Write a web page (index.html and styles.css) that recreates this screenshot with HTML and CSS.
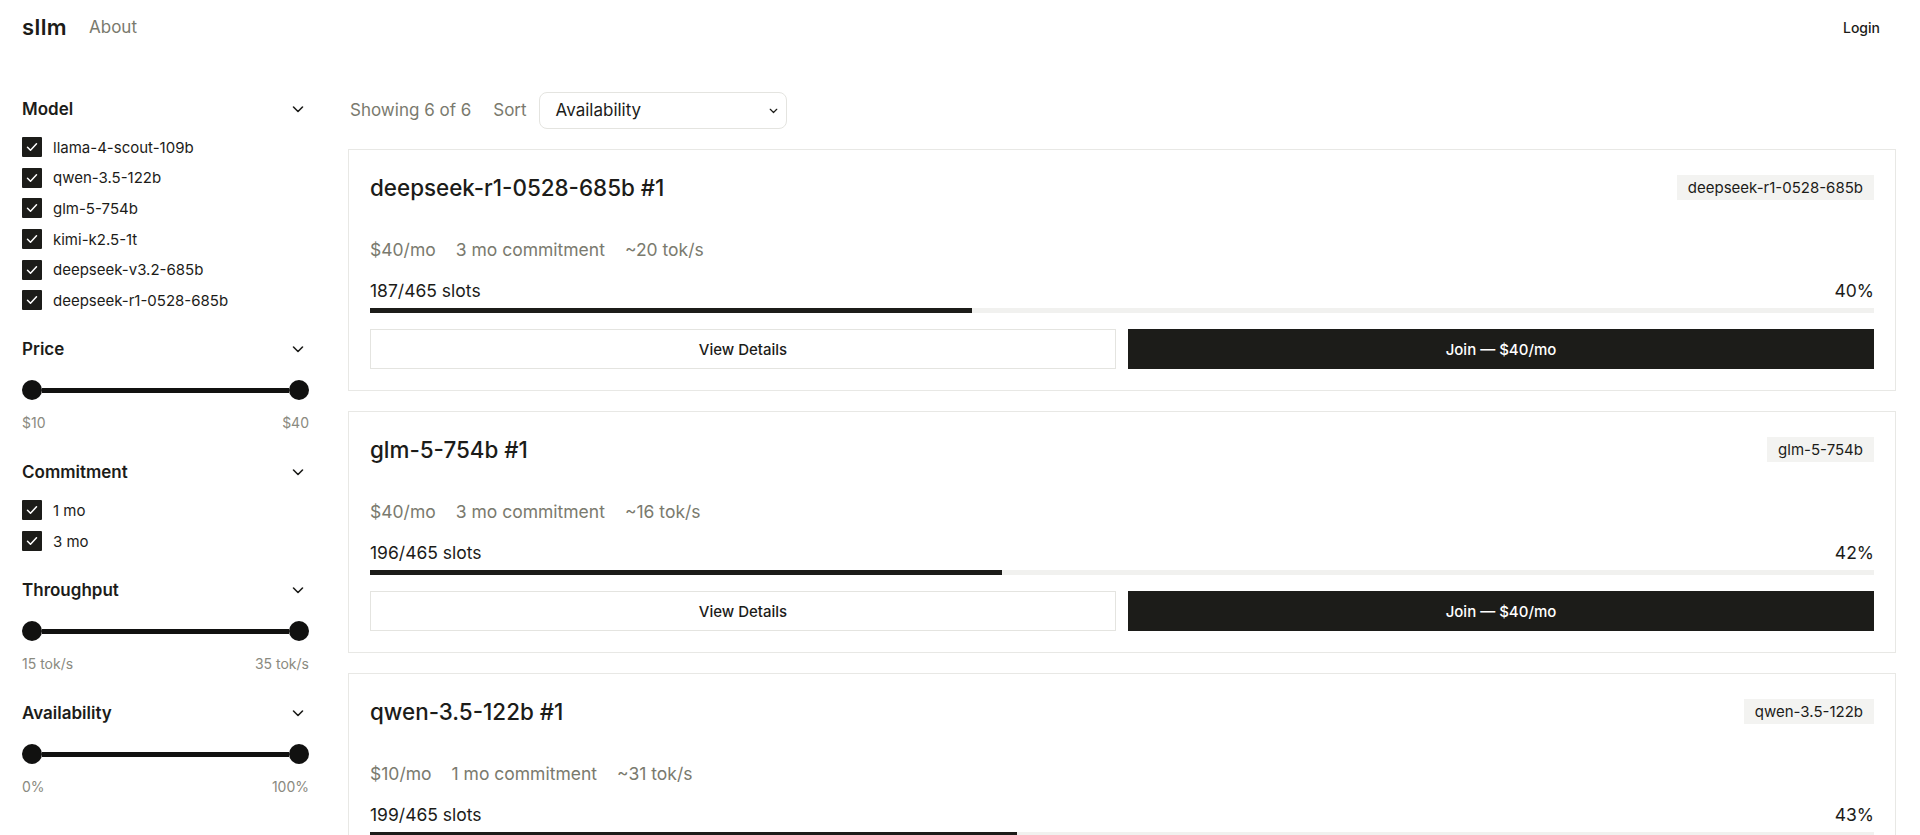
FILE: index.html
```html
<!DOCTYPE html>
<html lang="en">
<head>
<meta charset="utf-8">
<title>sllm</title>
<link rel="stylesheet" href="styles.css">
</head>
<body>
<header class="topbar">
  <nav class="nav-left">
    <a class="logo" href="#">sllm</a>
    <a class="nav-link" href="#">About</a>
  </nav>
  <a class="login" href="#">Login</a>
</header>

<div class="layout">
  <aside class="sidebar">
    <section class="filter">
      <div class="filter-head"><span>Model</span><svg class="chev" viewBox="0 0 16 16"><path d="M3.5 6l4.5 4.5L12.5 6"/></svg></div>
      <ul class="checks">
        <li><span class="box"><svg viewBox="0 0 20 20"><path d="M5.5 10.2l3 3 6-6.4"/></svg></span>llama-4-scout-109b</li>
        <li><span class="box"><svg viewBox="0 0 20 20"><path d="M5.5 10.2l3 3 6-6.4"/></svg></span>qwen-3.5-122b</li>
        <li><span class="box"><svg viewBox="0 0 20 20"><path d="M5.5 10.2l3 3 6-6.4"/></svg></span>glm-5-754b</li>
        <li><span class="box"><svg viewBox="0 0 20 20"><path d="M5.5 10.2l3 3 6-6.4"/></svg></span>kimi-k2.5-1t</li>
        <li><span class="box"><svg viewBox="0 0 20 20"><path d="M5.5 10.2l3 3 6-6.4"/></svg></span>deepseek-v3.2-685b</li>
        <li><span class="box"><svg viewBox="0 0 20 20"><path d="M5.5 10.2l3 3 6-6.4"/></svg></span>deepseek-r1-0528-685b</li>
      </ul>
    </section>

    <section class="filter">
      <div class="filter-head"><span>Price</span><svg class="chev" viewBox="0 0 16 16"><path d="M3.5 6l4.5 4.5L12.5 6"/></svg></div>
      <div class="range"><span class="thumb"></span><span class="track"></span><span class="thumb"></span></div>
      <div class="range-labels"><span>$10</span><span>$40</span></div>
    </section>

    <section class="filter">
      <div class="filter-head"><span>Commitment</span><svg class="chev" viewBox="0 0 16 16"><path d="M3.5 6l4.5 4.5L12.5 6"/></svg></div>
      <ul class="checks">
        <li><span class="box"><svg viewBox="0 0 20 20"><path d="M5.5 10.2l3 3 6-6.4"/></svg></span>1 mo</li>
        <li><span class="box"><svg viewBox="0 0 20 20"><path d="M5.5 10.2l3 3 6-6.4"/></svg></span>3 mo</li>
      </ul>
    </section>

    <section class="filter">
      <div class="filter-head"><span>Throughput</span><svg class="chev" viewBox="0 0 16 16"><path d="M3.5 6l4.5 4.5L12.5 6"/></svg></div>
      <div class="range"><span class="thumb"></span><span class="track"></span><span class="thumb"></span></div>
      <div class="range-labels"><span>15 tok/s</span><span>35 tok/s</span></div>
    </section>

    <section class="filter">
      <div class="filter-head"><span>Availability</span><svg class="chev" viewBox="0 0 16 16"><path d="M3.5 6l4.5 4.5L12.5 6"/></svg></div>
      <div class="range"><span class="thumb"></span><span class="track"></span><span class="thumb"></span></div>
      <div class="range-labels"><span>0%</span><span>100%</span></div>
    </section>
  </aside>

  <main class="main">
    <div class="toolbar">
      <span class="count">Showing 6 of 6</span>
      <span class="sort-label">Sort</span>
      <div class="select"><span>Availability</span><svg viewBox="0 0 16 16"><path d="M4 6.5l4 4 4-4"/></svg></div>
    </div>

    <div class="cards">
      <article class="card">
        <div class="card-head"><h2 class="card-title">deepseek-r1-0528-685b #1</h2><span class="tag">deepseek-r1-0528-685b</span></div>
        <div class="meta"><span>$40/mo</span><span>3 mo commitment</span><span>~20 tok/s</span></div>
        <div class="slots"><span>187/465 slots</span><span>40%</span></div>
        <div class="bar"><div class="fill" style="width:40%"></div></div>
        <div class="actions"><button class="btn btn-outline">View Details</button><button class="btn btn-solid">Join — $40/mo</button></div>
      </article>

      <article class="card">
        <div class="card-head"><h2 class="card-title">glm-5-754b #1</h2><span class="tag">glm-5-754b</span></div>
        <div class="meta"><span>$40/mo</span><span>3 mo commitment</span><span>~16 tok/s</span></div>
        <div class="slots"><span>196/465 slots</span><span>42%</span></div>
        <div class="bar"><div class="fill" style="width:42%"></div></div>
        <div class="actions"><button class="btn btn-outline">View Details</button><button class="btn btn-solid">Join — $40/mo</button></div>
      </article>

      <article class="card">
        <div class="card-head"><h2 class="card-title">qwen-3.5-122b #1</h2><span class="tag">qwen-3.5-122b</span></div>
        <div class="meta"><span>$10/mo</span><span>1 mo commitment</span><span>~31 tok/s</span></div>
        <div class="slots"><span>199/465 slots</span><span>43%</span></div>
        <div class="bar"><div class="fill" style="width:43%"></div></div>
        <div class="actions"><button class="btn btn-outline">View Details</button><button class="btn btn-solid">Join — $10/mo</button></div>
      </article>

      <article class="card">
        <div class="card-head"><h2 class="card-title">kimi-k2.5-1t #1</h2><span class="tag">kimi-k2.5-1t</span></div>
        <div class="meta"><span>$20/mo</span><span>1 mo commitment</span><span>~24 tok/s</span></div>
        <div class="slots"><span>221/465 slots</span><span>48%</span></div>
        <div class="bar"><div class="fill" style="width:48%"></div></div>
        <div class="actions"><button class="btn btn-outline">View Details</button><button class="btn btn-solid">Join — $20/mo</button></div>
      </article>

      <article class="card">
        <div class="card-head"><h2 class="card-title">deepseek-v3.2-685b #1</h2><span class="tag">deepseek-v3.2-685b</span></div>
        <div class="meta"><span>$30/mo</span><span>3 mo commitment</span><span>~22 tok/s</span></div>
        <div class="slots"><span>247/465 slots</span><span>53%</span></div>
        <div class="bar"><div class="fill" style="width:53%"></div></div>
        <div class="actions"><button class="btn btn-outline">View Details</button><button class="btn btn-solid">Join — $30/mo</button></div>
      </article>

      <article class="card">
        <div class="card-head"><h2 class="card-title">llama-4-scout-109b #1</h2><span class="tag">llama-4-scout-109b</span></div>
        <div class="meta"><span>$10/mo</span><span>1 mo commitment</span><span>~35 tok/s</span></div>
        <div class="slots"><span>289/465 slots</span><span>62%</span></div>
        <div class="bar"><div class="fill" style="width:62%"></div></div>
        <div class="actions"><button class="btn btn-outline">View Details</button><button class="btn btn-solid">Join — $10/mo</button></div>
      </article>
    </div>
  </main>
</div>
</body>
</html>
```

FILE: styles.css
```css
* { box-sizing: border-box; }

html, body {
  margin: 0;
  padding: 0;
  background: #ffffff;
  color: #1c1c19;
  font-family: Inter, "Noto Sans", "Liberation Sans", sans-serif;
}

a { color: inherit; text-decoration: none; }

/* Header */
.topbar {
  display: flex;
  align-items: center;
  justify-content: space-between;
  height: 54px;
  padding: 0 40px 0 22px;
}
.nav-left {
  display: flex;
  align-items: center;
  gap: 22px;
}
.logo {
  font-size: 22px;
  font-weight: 600;
  letter-spacing: 0.4px;
}
.nav-link {
  font-size: 17px;
  color: #7a7a6e;
}
.login {
  font-size: 14px;
  font-weight: 500;
}

/* Layout */
.layout {
  display: flex;
  gap: 39px;
  padding: 38px 24px 0 22px;
}

/* Sidebar */
.sidebar {
  width: 287px;
  flex-shrink: 0;
  display: flex;
  flex-direction: column;
  gap: 22px;
}
.filter {
  display: flex;
  flex-direction: column;
}
.filter-head {
  height: 34px;
  display: flex;
  align-items: center;
  justify-content: space-between;
  font-size: 17px;
  font-weight: 600;
  margin-bottom: 11px;
}
.chev {
  width: 16px;
  height: 16px;
  margin-right: 3px;
  fill: none;
  stroke: #1c1c19;
  stroke-width: 1.6;
  stroke-linecap: round;
  stroke-linejoin: round;
}
.checks {
  list-style: none;
  margin: 0;
  padding: 0;
  display: flex;
  flex-direction: column;
  gap: 10.7px;
}
.checks li {
  display: flex;
  align-items: center;
  gap: 11px;
  height: 20px;
  font-size: 15px;
}
.box {
  width: 20px;
  height: 20px;
  background: #1c1c19;
  border-radius: 1px;
  display: flex;
  align-items: center;
  justify-content: center;
}
.box svg {
  width: 20px;
  height: 20px;
  fill: none;
  stroke: #ffffff;
  stroke-width: 1.5;
  stroke-linecap: round;
  stroke-linejoin: round;
}
.range {
  display: flex;
  align-items: center;
  height: 20px;
  margin-top: 3px;
}
.thumb {
  width: 20px;
  height: 20px;
  border-radius: 50%;
  background: #111110;
  flex-shrink: 0;
}
.track {
  flex: 1;
  height: 5px;
  background: #111110;
}
.range-labels {
  display: flex;
  justify-content: space-between;
  font-size: 14px;
  line-height: 20px;
  color: #8a8a80;
  margin-top: 13px;
}

/* Main */
.main {
  flex: 1;
  min-width: 0;
}
.toolbar {
  display: flex;
  align-items: center;
  height: 36px;
  padding-left: 2px;
  font-size: 17px;
  color: #7a7a6e;
}
.count { margin-right: 22px; }
.sort-label { margin-right: 12px; }
.select {
  width: 248px;
  height: 37px;
  border: 1px solid #e4e4e0;
  border-radius: 8px;
  display: flex;
  align-items: center;
  justify-content: space-between;
  padding: 0 6px 0 16px;
  color: #1c1c19;
  font-size: 17px;
}
.select svg {
  width: 13px;
  height: 13px;
  fill: none;
  stroke: #1c1c19;
  stroke-width: 1.5;
  stroke-linecap: round;
  stroke-linejoin: round;
}

.cards {
  margin-top: 21px;
  display: flex;
  flex-direction: column;
  gap: 20px;
}
.card {
  border: 1px solid #e8e8e5;
  padding: 20px 21px 21px;
}
.card-head {
  display: flex;
  align-items: center;
  justify-content: space-between;
  height: 35px;
}
.card-title {
  margin: 0;
  font-size: 22.4px;
  font-weight: 500;
  line-height: 34px;
}
.tag {
  background: #f3f3f1;
  font-size: 15px;
  line-height: 25px;
  padding: 0 11px;
}
.meta {
  display: flex;
  gap: 20px;
  margin-top: 33px;
  font-size: 17.5px;
  line-height: 24px;
  color: #7a7a6e;
}
.slots {
  display: flex;
  justify-content: space-between;
  margin-top: 17px;
  font-size: 17.5px;
  line-height: 24px;
}
.bar {
  margin-top: 5px;
  height: 5px;
  background: #f1f1ef;
}
.fill {
  height: 100%;
  background: #1c1c19;
}
.actions {
  display: flex;
  gap: 12px;
  margin-top: 16px;
}
.btn {
  flex: 1;
  height: 40px;
  font-family: inherit;
  font-size: 15px;
  font-weight: 500;
  border-radius: 0;
  cursor: pointer;
}
.btn-outline {
  background: #ffffff;
  border: 1px solid #e4e4e0;
  color: #1c1c19;
}
.btn-solid {
  background: #1c1c19;
  border: 1px solid #1c1c19;
  color: #ffffff;
}
```
